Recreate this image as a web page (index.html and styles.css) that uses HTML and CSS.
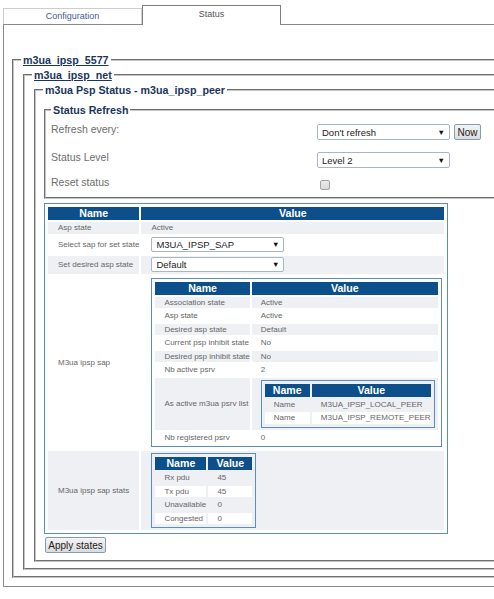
FILE: index.html
```html
<!DOCTYPE html>
<html>
<head>
<meta charset="utf-8">
<title>Status</title>
<link rel="stylesheet" href="styles.css">
</head>
<body>
<div class="tabs">
  <div class="tab">Configuration</div>
  <div class="tab tab-active">Status</div>
</div>
<div class="panel">
  <fieldset class="fs fs1">
    <legend class="lg"><a class="lnk" href="#">m3ua_ipsp_5577</a></legend>
    <fieldset class="fs fs2">
      <legend class="lg"><a class="lnk" href="#">m3ua_ipsp_net</a></legend>
      <fieldset class="fs fs3">
        <legend class="lg lg3">m3ua Psp Status - m3ua_ipsp_peer</legend>
        <fieldset class="fs fs4">
          <legend class="lg lg4">Status Refresh</legend>
          <div class="refresh">
            <div class="rlabel">Refresh every:</div>
            <div class="rctl">
              <span class="sel"><select class="select"><option>Don't refresh</option></select></span>
              <button class="btn now" type="button">Now</button>
            </div>
            <div class="rlabel">Status Level</div>
            <div class="rctl">
              <span class="sel"><select class="select"><option>Level 2</option></select></span>
            </div>
            <div class="rlabel">Reset status</div>
            <div class="rctl">
              <input class="chk" type="checkbox">
            </div>
          </div>
        </fieldset>

        <table class="grid main">
          <thead>
            <tr><th class="c-main-n">Name</th><th class="c-main-v">Value</th></tr>
          </thead>
          <tbody>
            <tr><td>Asp state</td><td>Active</td></tr>
            <tr class="row-sel"><td>Select sap for set state</td><td><span class="sel sel-sm"><select class="select"><option>M3UA_IPSP_SAP</option></select></span></td></tr>
            <tr class="row-sel"><td>Set desired asp state</td><td><span class="sel sel-sm"><select class="select"><option>Default</option></select></span></td></tr>
            <tr class="row-box"><td>M3ua ipsp sap</td><td>
              <table class="grid sub">
                <thead>
                  <tr><th class="c-i-n">Name</th><th class="c-i-v">Value</th></tr>
                </thead>
                <tbody>
                  <tr><td>Association state</td><td>Active</td></tr>
                  <tr><td>Asp state</td><td>Active</td></tr>
                  <tr><td>Desired asp state</td><td>Default</td></tr>
                  <tr><td>Current psp inhibit state</td><td>No</td></tr>
                  <tr><td>Desired psp inhibit state</td><td>No</td></tr>
                  <tr><td>Nb active psrv</td><td>2</td></tr>
                  <tr class="row-box"><td>As active m3ua psrv list</td><td>
                    <table class="grid sub">
                      <thead>
                        <tr><th class="c-n-n">Name</th><th class="c-n-v">Value</th></tr>
                      </thead>
                      <tbody>
                        <tr><td>Name</td><td>M3UA_IPSP_LOCAL_PEER</td></tr>
                        <tr><td>Name</td><td>M3UA_IPSP_REMOTE_PEER</td></tr>
                      </tbody>
                    </table>
                  </td></tr>
                  <tr><td>Nb registered psrv</td><td>0</td></tr>
                </tbody>
              </table>
            </td></tr>
            <tr class="row-box"><td>M3ua ipsp sap stats</td><td>
              <table class="grid sub">
                <thead>
                  <tr><th class="c-s-n">Name</th><th class="c-s-v">Value</th></tr>
                </thead>
                <tbody>
                  <tr><td>Rx pdu</td><td>45</td></tr>
                  <tr><td>Tx pdu</td><td>45</td></tr>
                  <tr><td>Unavailable</td><td>0</td></tr>
                  <tr><td>Congested</td><td>0</td></tr>
                </tbody>
              </table>
            </td></tr>
          </tbody>
        </table>
        <button class="btn apply" type="button">Apply states</button>
      </fieldset>
    </fieldset>
  </fieldset>
</div>
</body>
</html>
```
FILE: styles.css
```css
html, body {
  margin: 0;
  padding: 0;
  overflow: hidden;
  background: #fff;
}
body {
  font-family: "Liberation Sans", Arial, sans-serif;
  color: #333;
  width: 620px;
}

/* tabs */
.tabs {
  display: flex;
  align-items: flex-end;
  height: 19px;
  margin-top: 5px;
  padding-left: 3px;
}
.tab {
  box-sizing: border-box;
  width: 139px;
  height: 16px;
  border: 1px solid #cdcdcd;
  border-bottom: none;
  background: #fff;
  text-align: center;
  font-size: 9px;
  line-height: 15px;
  color: #3f6190;
}
.tab-active {
  height: 20px;
  margin-bottom: -1px;
  border-color: #808080;
  color: #555;
  line-height: 17px;
  position: relative;
  z-index: 1;
}

/* panel + fieldsets */
.panel {
  margin-left: 3px;
  width: 580px;
  border: 1px solid #8a8a8a;
  padding: 28px 0 8px 8px;
}
.fs {
  margin: 0;
  min-width: 0;
  border: 2px groove #c4c4c4;
}
.fs1, .fs2 {
  padding: 1px 8px 6px 9px;
}
.fs3 {
  padding: 6px 8px 7px 8px;
}
.fs4 {
  padding: 5px 8px 4px 5px;
}
.lg {
  font-size: 10.7px;
  font-weight: bold;
  line-height: 14px;
  color: #1b365d;
  padding: 0 2px;
  margin-left: -2px;
}
.lg3 { margin-left: -1px; }
.lg4 { margin-left: 0; }
.lnk {
  color: #1b365d;
  text-decoration: underline;
}

/* status refresh */
.refresh {
  display: grid;
  grid-template-columns: 266px auto;
  grid-template-rows: 28px 25px 18px;
}
.rlabel {
  font-size: 10.5px;
  line-height: 14px;
  color: #6d6d6d;
}
.rctl {
  display: flex;
  align-items: flex-start;
  gap: 4px;
  padding-top: 2px;
}
.sel {
  position: relative;
  display: block;
  width: 133px;
}
.sel::after {
  content: "\25BC";
  position: absolute;
  right: 5px;
  top: 0;
  height: 100%;
  display: flex;
  align-items: center;
  font-size: 7.5px;
  color: #111;
  pointer-events: none;
}
.select {
  -webkit-appearance: none;
  appearance: none;
  box-sizing: border-box;
  display: block;
  width: 133px;
  height: 16px;
  margin: 0;
  padding: 0 14px 0 4px;
  border: 1px solid #a7b5c6;
  border-radius: 2px;
  background: #fff;
  font-family: "Liberation Sans", Arial, sans-serif;
  font-size: 9.5px;
  color: #222;
}
.sel-sm .select {
  height: 15px;
}
.btn {
  box-sizing: border-box;
  margin: 0;
  padding: 0;
  height: 16px;
  border: 1px solid #7f9dbd;
  border-radius: 2px;
  background: linear-gradient(#f4f4f4, #dcdcdc);
  font-family: "Liberation Sans", Arial, sans-serif;
  font-size: 10px;
  color: #222;
}
.now {
  width: 27px;
}
.chk {
  -webkit-appearance: none;
  appearance: none;
  box-sizing: border-box;
  width: 10px;
  height: 10px;
  margin: 3px 0 0 3px;
  border: 1px solid #a3a3a3;
  border-radius: 2px;
  background: linear-gradient(#ececec, #d8d8d8);
}

/* data tables */
.grid {
  border: 1px solid #5a8ec2;
  padding: 1px;
  border-spacing: 2px;
  font-size: 8px;
  color: #666;
}
.main {
  margin-top: 4px;
  background: #fff;
}
.sub {
  background: transparent;
}
.grid th {
  background: #0c4f8a;
  color: #fff;
  font-size: 10.6px;
  font-weight: bold;
  height: 13px;
  line-height: 13px;
  padding: 0;
  text-align: center;
}
.grid td {
  padding: 0 0 0 9px;
  line-height: 11.5px;
  height: 11.5px;
  vertical-align: middle;
  text-align: left;
  white-space: nowrap;
}
.main > tbody > tr > td {
  padding-left: 10px;
}
.main > tbody > tr.row-sel > td {
  padding-top: 1.5px;
  padding-bottom: 1.5px;
}
.grid > tbody > tr.row-box > td {
  padding-top: 2px;
  padding-bottom: 2px;
}
.grid > tbody > tr:nth-child(odd) > td {
  background: #eef0f4;
}
.grid > tbody > tr:nth-child(even) > td {
  background: #fff;
}

.c-main-n { width: 90px; }
.c-main-v { width: 303px; }
.c-i-n { width: 94px; }
.c-i-v { width: 186px; }
.c-n-n { width: 45px; }
.c-n-v { width: 119px; }
.c-s-n { width: 51px; }
.c-s-v { width: 44px; }

.apply {
  display: block;
  width: 61px;
  margin: 3px 0 0 1px;
}
```
